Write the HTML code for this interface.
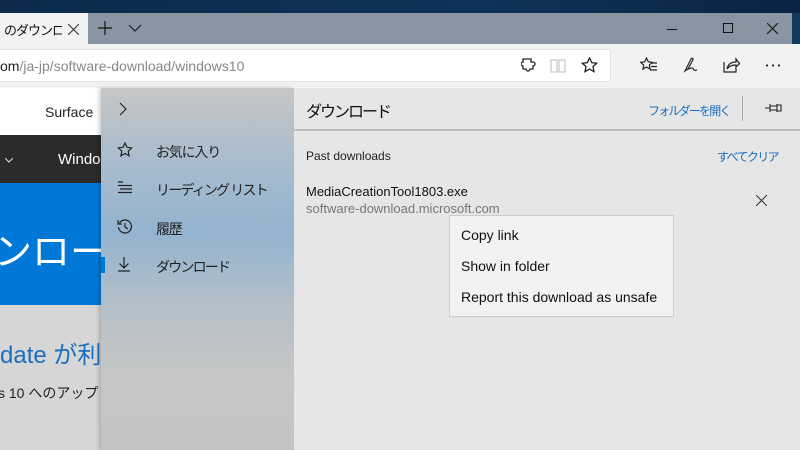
<!DOCTYPE html>
<html><head><meta charset="utf-8"><style>
*{margin:0;padding:0;box-sizing:border-box}
body{width:800px;height:450px;overflow:hidden;position:relative;font-family:"Liberation Sans","Noto Sans CJK JP",sans-serif;background:#dcdcdc}
.a{position:absolute}
.t{white-space:nowrap}
.j{letter-spacing:-1.2px}
svg path,svg circle,svg rect{vector-effect:non-scaling-stroke}
</style></head><body>
<div class="a" style="left:0;top:0;width:800px;height:14px;background:linear-gradient(90deg,#0b2a4c,#0e3358 60%,#0a2444)"></div>
<div class="a" style="left:0;top:13px;width:792px;height:31px;background:#8995a2"></div>
<div class="a" style="left:792px;top:13px;width:8px;height:31px;background:#123a60"></div>
<div class="a" style="left:0;top:13px;width:88px;height:31px;background:#f2f2f2"></div>
<div class="a t" style="left:4px;top:20px;width:58px;height:20px;overflow:hidden;font-size:13px;color:#111;letter-spacing:-1px">のダウンロー</div>
<svg class="a" style="left:68px;top:24px" width="11" height="11"><path d="M0 0l11 11M11 0L0 11" stroke="#333" stroke-width="1.1"/></svg>
<svg class="a" style="left:98px;top:21px" width="14" height="14"><path d="M7 0v14M0 7h14" stroke="#111" stroke-width="1.2"/></svg>
<svg class="a" style="left:128px;top:24px" width="14" height="9"><path d="M1 1l6 6 6-6" stroke="#222" fill="none" stroke-width="1.2"/></svg>
<div class="a" style="left:667px;top:29px;width:10px;height:1px;background:#111"></div>
<div class="a" style="left:723px;top:23px;width:10px;height:10px;border:1px solid #111"></div>
<svg class="a" style="left:767px;top:23px" width="11" height="11"><path d="M0 0l11 11M11 0L0 11" stroke="#111" stroke-width="1.1"/></svg>
<div class="a" style="left:0;top:44px;width:800px;height:44px;background:#f2f2f2"></div>
<div class="a" style="left:0;top:49px;width:211px;height:33px;background:#fff;border-top:1px solid #e2e2e2;border-bottom:1px solid #e2e2e2"></div>
<div class="a" style="left:210px;top:49px;width:401px;height:33px;background:#fff;border:1px solid #e2e2e2;border-left:0"></div>
<div class="a t" style="left:0;top:58px;font-size:14px;color:#888"><span style="color:#222">om</span>/ja-jp/software-download/windows10</div>
<svg class="a" style="left:521px;top:57px" width="16" height="16"><path d="M6 1h4v3h2a2 2 0 1 1 0 4h0v3h-3a2 2 0 1 1-4 0H2V8a2 2 0 1 1 0-4V1z" transform="translate(0,1)" stroke="#222" fill="none" stroke-width="1.3"/></svg>
<svg class="a" style="left:550px;top:59px" width="16" height="14"><path d="M1 1h6v12H1zM9 1h6v12H9z" stroke="#bbb" fill="none"/></svg>
<svg class="a" style="left:581px;top:57px" width="17" height="16"><path d="M8.5 1l2.2 4.6 5 .6-3.7 3.4 1 5-4.5-2.5-4.5 2.5 1-5L1.3 6.2l5-.6z" stroke="#222" fill="none" stroke-width="1.3"/></svg>
<svg class="a" style="left:640px;top:57px" width="18" height="16"><path d="M6.5 1l1.8 3.8 4 .5-3 2.8.8 4-3.6-2-3.6 2 .8-4-3-2.8 4-.5z" stroke="#222" fill="none" stroke-width="1.2"/><path d="M11 6h6M11 9.5h6M10 13h7" stroke="#222" stroke-width="1.2"/></svg>
<svg class="a" style="left:682px;top:57px" width="16" height="16"><path d="M3 14L9 2c1-1.5 2.5-.5 1.8 1L6 12 3 14zM6 12c3 0 4-3 6 1 1 1 2 0 3 0" stroke="#222" fill="none" stroke-width="1.2"/></svg>
<svg class="a" style="left:723px;top:57px" width="17" height="16"><path d="M1 5v10h12v-4" stroke="#222" fill="none" stroke-width="1.2"/><path d="M4 12c1-5 4-7 9-7V2l3.5 4.5L13 10V8c-4 0-7 1-9 4z" stroke="#222" fill="none" stroke-width="1.2"/></svg>
<svg class="a" style="left:765px;top:64px" width="16" height="3"><circle cx="2" cy="1.5" r="1.1" fill="#222"/><circle cx="8" cy="1.5" r="1.1" fill="#222"/><circle cx="14" cy="1.5" r="1.1" fill="#222"/></svg>
<div class="a" style="left:0;top:88px;width:101px;height:47px;background:#fff"></div>
<div class="a t" style="left:45px;top:104px;font-size:14px;color:#222">Surface</div>
<div class="a" style="left:0;top:135px;width:101px;height:48px;background:#2b2b2b"></div>
<svg class="a" style="left:5px;top:158px" width="8" height="5"><path d="M0 0l4 4 4-4" stroke="#ddd" fill="none"/></svg>
<div class="a t" style="left:58px;top:151px;font-size:15px;color:#fff">Windo</div>
<div class="a" style="left:0;top:183px;width:101px;height:122px;background:#0078d7;overflow:hidden"><div class="a t" style="left:-6px;top:38px;font-size:38px;color:#fff">ンロー</div></div>
<div class="a" style="left:0;top:305px;width:101px;height:145px;background:#d6d6d6;overflow:hidden">
<div class="a t" style="left:0;top:30px;font-size:24px;color:#1a6fc0">date が利</div>
<div class="a t" style="left:-2px;top:78px;font-size:14px;color:#222">s 10 へのアップ</div></div>
<div class="a" style="left:101px;top:88px;width:193px;height:362px;background:linear-gradient(180deg,#c6c6c6 0%,#a9bccd 20%,#93b3cf 40%,#b4bfc8 60%,#c6c6c6 80%,#c4c4c4 100%);box-shadow:-2px 0 4px rgba(0,0,0,.2)"></div>
<svg class="a" style="left:119px;top:102px" width="9" height="14"><path d="M1 1l6 6-6 6" stroke="#222" fill="none" stroke-width="1.2"/></svg>
<svg class="a" style="left:117px;top:142px" width="16" height="15"><path d="M8 1l2 4.3 4.7.6-3.5 3.2.9 4.7L8 11.5l-4.1 2.3.9-4.7L1.3 5.9 6 5.3z" stroke="#222" fill="none" stroke-width="1.2"/></svg>
<div class="a t j" style="left:156px;top:142px;font-size:14px;color:#222">お気に入り</div>
<svg class="a" style="left:117px;top:181px" width="16" height="14"><path d="M1 1h5M1 4.5h14M3 8h12M1 11.5h14" stroke="#222" stroke-width="1.2"/></svg>
<div class="a t j" style="left:156px;top:180px;font-size:14px;color:#222;letter-spacing:-1.8px">リーディング リスト</div>
<svg class="a" style="left:117px;top:219px" width="16" height="16"><path d="M2.5 4A6.5 6.5 0 1 1 1.5 8" stroke="#222" fill="none" stroke-width="1.2"/><path d="M1 1v4h4M8 4v4l3 2" stroke="#222" fill="none" stroke-width="1.2"/></svg>
<div class="a t j" style="left:156px;top:219px;font-size:14px;color:#222">履歴</div>
<div class="a" style="left:101px;top:257px;width:4px;height:16px;background:#0078d7"></div>
<svg class="a" style="left:118px;top:256px" width="12" height="16"><path d="M6 1v11M1.5 7.5L6 12l4.5-4.5M0 15h12" stroke="#222" fill="none" stroke-width="1.2"/></svg>
<div class="a t j" style="left:156px;top:257px;font-size:14px;color:#222;letter-spacing:-1.8px">ダウンロード</div>
<div class="a" style="left:294px;top:88px;width:506px;height:362px;background:#e6e6e6"></div>
<div class="a" style="left:294px;top:129px;width:506px;height:2px;background:#bdbdbd"></div>
<div class="a t j" style="left:306px;top:98px;font-size:16px;color:#111;letter-spacing:-2px">ダウンロード</div>
<div class="a t j" style="left:648px;top:102px;font-size:12px;color:#1a6fc0;letter-spacing:-1.8px">フォルダーを開く</div>
<div class="a" style="left:742px;top:96px;width:1px;height:25px;background:#aaa"></div>
<svg class="a" style="left:765px;top:103px" width="17" height="10"><path d="M0 5h5M5 1v8M5 3h7V1v8V7H5M12 2h4v6h-4" stroke="#222" fill="none" stroke-width="1.1"/></svg>
<div class="a t" style="left:306px;top:149px;font-size:12px;color:#222">Past downloads</div>
<div class="a t j" style="left:717px;top:148px;font-size:12px;color:#1a6fc0;letter-spacing:-1.6px">すべてクリア</div>
<div class="a t" style="left:306px;top:184px;font-size:13px;color:#111">MediaCreationTool1803.exe</div>
<div class="a t" style="left:306px;top:201px;font-size:13px;color:#777">software-download.microsoft.com</div>
<svg class="a" style="left:756px;top:195px" width="11" height="11"><path d="M0 0l11 11M11 0L0 11" stroke="#333" stroke-width="1"/></svg>
<div class="a" style="left:449px;top:215px;width:225px;height:102px;background:#f2f2f2;border:1px solid #ccc"></div>
<div class="a t" style="left:461px;top:227px;font-size:14px;color:#111">Copy link</div>
<div class="a t" style="left:461px;top:258px;font-size:14px;color:#111">Show in folder</div>
<div class="a t" style="left:461px;top:289px;font-size:14px;color:#111">Report this download as unsafe</div>
</body></html>
